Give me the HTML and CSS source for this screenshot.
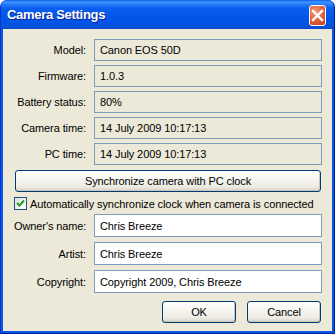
FILE: index.html
```html
<!DOCTYPE html>
<html lang="en">
<head>
  <meta charset="UTF-8">
  <title>Camera Settings</title>
  <link rel="stylesheet" href="styles.css">
</head>
<body>

  <div class="window">
    <div class="titlebar">
      <span class="title">Camera Settings</span>
      <button class="close" title="Close">
        <svg width="13" height="13" viewBox="0 0 13 13">
          <path d="M2 2 L11 11 M11 2 L2 11" stroke="#fff" stroke-width="2.4" stroke-linecap="square"/>
        </svg>
      </button>
    </div>

    <div class="dialog">
      <div class="row info">
        <label>Model:</label>
        <div class="field readonly">Canon EOS 50D</div>
      </div>
      <div class="row info">
        <label>Firmware:</label>
        <div class="field readonly">1.0.3</div>
      </div>
      <div class="row info">
        <label>Battery status:</label>
        <div class="field readonly">80%</div>
      </div>
      <div class="row info">
        <label>Camera time:</label>
        <div class="field readonly">14 July 2009 10:17:13</div>
      </div>
      <div class="row info">
        <label>PC time:</label>
        <div class="field readonly">14 July 2009 10:17:13</div>
      </div>

      <button class="xp-btn sync">Synchronize camera with PC clock</button>

      <div class="check-row">
        <span class="checkbox">
          <svg width="9" height="9" viewBox="0 0 9 9">
            <path d="M1 4 L3.5 6.5 L8 1.5" fill="none" stroke="#21a121" stroke-width="2"/>
          </svg>
        </span>
        <span>Automatically synchronize clock when camera is connected</span>
      </div>

      <div class="row edit">
        <label>Owner's name:</label>
        <div class="field">Chris Breeze</div>
      </div>
      <div class="row edit">
        <label>Artist:</label>
        <div class="field">Chris Breeze</div>
      </div>
      <div class="row edit">
        <label>Copyright:</label>
        <div class="field">Copyright 2009, Chris Breeze</div>
      </div>

      <div class="button-row">
        <button class="xp-btn">OK</button>
        <button class="xp-btn">Cancel</button>
      </div>
    </div>
  </div>

</body>
</html>
```

FILE: styles.css
```css
body {
  margin: 0;
  background: #fff;
  font-family: 'Liberation Sans', Arial, sans-serif;
  font-size: 11px;
  letter-spacing: -0.1px;
  color: #000;
}
.window {
  width: 335px;
  height: 334px;
  display: flex;
  flex-direction: column;
  background: #0a55e4;
  border-radius: 7px 7px 0 0;
  box-sizing: border-box;
  border-left: 1px solid #0831d9;
  border-right: 1px solid #001ea0;
  border-bottom: 1px solid #001ea0;
}
.titlebar {
  height: 29px;
  display: flex;
  align-items: center;
  justify-content: space-between;
  padding: 0 8px 0 6px;
  border-radius: 7px 7px 0 0;
  background: linear-gradient(#0a5fe8 0, #3d95ff 2px, #2a80fb 4px, #0a5fec 8px, #0356eb 16px, #0055e8 22px, #0a51d8 27px, #0a46c8 29px);
}
.title {
  color: #fff;
  font-weight: bold;
  font-size: 13px;
  text-shadow: 1px 1px #0f1f8c;
  letter-spacing: -0.3px;
}
.close {
  width: 17px;
  height: 21px;
  padding: 0;
  margin-top: 2px;
  border: 1px solid #fff;
  border-radius: 3px;
  background: radial-gradient(circle at 35% 30%, #f29c80 0, #e4643e 45%, #c8401a 100%);
  display: flex;
  align-items: center;
  justify-content: center;
}
.dialog {
  flex: 1;
  margin: 0 2px 2px 2px;
  background: #ece9d8;
  padding: 10px 10px 0 11px;
  display: flex;
  flex-direction: column;
}
.row {
  display: flex;
  align-items: center;
}
.row label {
  width: 72px;
  margin-right: 8px;
  text-align: right;
  white-space: nowrap;
}
.row.info {
  height: 22px;
  margin-bottom: 4px;
}
.row.edit {
  height: 23px;
  margin-bottom: 5px;
}
.field {
  flex: 1;
  height: 100%;
  box-sizing: border-box;
  border: 1px solid #7f9db9;
  background: #fff;
  padding: 0 5px;
  display: flex;
  align-items: center;
}
.field.readonly {
  background: #ece9d8;
}
.xp-btn {
  font-family: inherit;
  font-size: 11px;
  letter-spacing: inherit;
  color: #000;
  height: 22px;
  padding: 0;
  border: 1px solid #003c74;
  border-radius: 3px;
  background: linear-gradient(#ffffff 0, #f6f5f0 40%, #ecebe4 80%, #d6d0c5 100%);
  box-shadow: inset -1px -1px 0 #cdc7ba;
}
.sync {
  margin: 1px 1px 0 1px;
}
.check-row {
  display: flex;
  align-items: center;
  gap: 3px;
  margin: 5px 0 4px 0;
  height: 13px;
}
.checkbox {
  width: 13px;
  height: 13px;
  box-sizing: border-box;
  border: 1px solid #1c5180;
  background: linear-gradient(135deg, #dcdcd7, #fff);
  display: flex;
  align-items: center;
  justify-content: center;
}
.button-row {
  display: flex;
  justify-content: flex-end;
  gap: 11px;
  margin-top: 3px;
  padding-right: 1px;
}
.button-row .xp-btn {
  width: 74px;
}
```
